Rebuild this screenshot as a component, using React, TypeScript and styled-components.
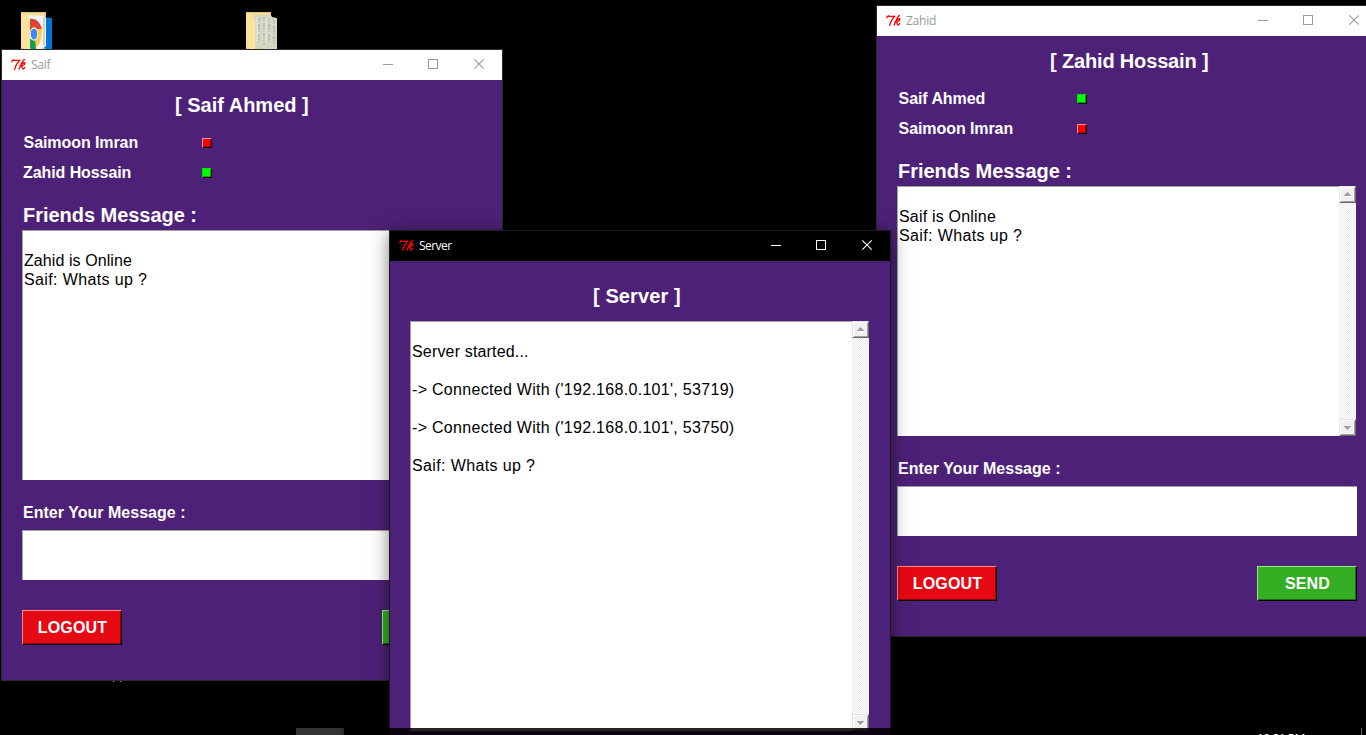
import React from "react";
import styled, { createGlobalStyle, css } from "styled-components";

const PURPLE = "#4d2177";

const GlobalStyle = createGlobalStyle`
  * { box-sizing: border-box; }
  html, body { margin: 0; background: #000; overflow: hidden; }
`;

const Desktop = styled.main`
  position: relative;
  width: 1366px;
  height: 735px;
  overflow: hidden;
  background: #000;
  font-family: "Liberation Sans", Arial, sans-serif;
`;

const Shortcut = styled.div<{ $x: number }>`
  position: absolute;
  left: ${(p) => p.$x}px;
  top: 12px;
  svg { display: block; }
`;

const ShortcutLabel = styled.span`
  position: absolute;
  left: 112px;
  top: 667px;
  color: #c8c8c8;
  font: 12px/16px "Open Sans", sans-serif;
`;

const Frame = styled.section<{ $x: number; $y: number; $active?: boolean }>`
  position: absolute;
  left: ${(p) => p.$x}px;
  top: ${(p) => p.$y}px;
  width: 502px;
  height: 632px;
  display: flex;
  flex-direction: column;
  border: 1px solid #2a2a2a;
  background: ${PURPLE};
  ${(p) =>
    p.$active &&
    css`
      border-color: #1c1c1c;
      box-shadow: 0 3px 17px rgba(0, 0, 0, 0.5);
    `}
`;

const TitleBar = styled.header<{ $active?: boolean }>`
  display: flex;
  align-items: center;
  height: 30px;
  flex: none;
  padding-left: 9px;
  background: ${(p) => (p.$active ? "#000" : "#fff")};
  color: ${(p) => (p.$active ? "#fff" : "#999")};
`;

const Caption = styled.span<{ $tracking: number }>`
  flex: 1;
  padding-left: 5px;
  font: 12px/16px "Open Sans", "Noto Sans", sans-serif;
  letter-spacing: ${(p) => p.$tracking}px;
`;

const Controls = styled.svg`
  display: block;
  width: 119px;
  height: 30px;
`;

const Client = styled.div`
  display: flex;
  flex-direction: column;
  flex: 1;
  padding: 0 20px;
`;

const Title = styled.h1<{ $top: number; $height: number; $indent: number; $tracking?: number }>`
  margin: ${(p) => p.$top}px 0 0;
  height: ${(p) => p.$height}px;
  padding-left: ${(p) => p.$indent}px;
  font-size: 20px;
  line-height: 24px;
  font-weight: bold;
  letter-spacing: ${(p) => p.$tracking ?? 0}px;
  color: #fff;
  white-space: nowrap;
`;

const FriendRow = styled.div`
  display: flex;
  align-items: center;
  height: 30px;
`;

const FriendName = styled.span<{ $indent: number }>`
  width: 180px;
  padding: 2px 0 0 ${(p) => p.$indent}px;
  font-size: 16px;
  font-weight: bold;
  line-height: 20px;
  letter-spacing: -0.08px;
  color: #fff;
`;

const Status = styled.i<{ $online: boolean }>`
  width: 10px;
  height: 10px;
  margin-top: 2px;
  background: ${(p) => (p.$online ? "#00ff00" : "#ff0000")};
  border: 1px solid #000;
  border-top-color: ${(p) => (p.$online ? "#00e000" : "#ff9090")};
  border-left-color: ${(p) => (p.$online ? "#00e000" : "#ff9090")};
  box-shadow: inset -1px -1px ${(p) => (p.$online ? "#00a800" : "#b00000")};
`;

const Heading = styled.h2`
  margin: 16px 0 0;
  height: 27px;
  padding-left: 1px;
  font-size: 20px;
  line-height: 24px;
  letter-spacing: -0.03px;
  color: #fff;
`;

const Label = styled.label`
  height: 50px;
  padding: 23px 0 0 1px;
  font-size: 16px;
  font-weight: bold;
  line-height: 20px;
  letter-spacing: 0.02px;
  color: #fff;
`;

const LogBox = styled.div<{ $height: number }>`
  display: flex;
  flex: none;
  width: 459px;
  height: ${(p) => p.$height}px;
  background: #fff;
`;

const LogText = styled.div`
  flex: 1;
  padding: 20px 0 0 1px;
  border-top: 1px solid #a0a0a0;
  border-left: 1px solid #a0a0a0;
  font: 16px/19px "Liberation Sans", Arial, sans-serif;
  color: #000;
`;

const LogLine = styled.div<{ $tracking: number }>`
  height: 19px;
  white-space: pre;
  letter-spacing: ${(p) => p.$tracking}px;
`;

const Scrollbar = styled.div`
  display: flex;
  flex-direction: column;
  justify-content: space-between;
  width: 17px;
  background: repeating-conic-gradient(#ececec 0 25%, #fff 0 50%) 0 0 / 2px 2px;
`;

const ScrollButton = styled.span`
  display: flex;
  width: 17px;
  height: 17px;
  background: #f0f0f0;
  border: 1px solid #696969;
  border-top-color: #e3e3e3;
  border-left-color: #e3e3e3;
  box-shadow: inset 1px 1px #fff, inset -1px -1px #a0a0a0;
`;

const Entry = styled.div`
  width: 460px;
  height: 50px;
  background: #fff;
  border-top: 1px solid #a0a0a0;
  border-left: 1px solid #a0a0a0;
`;

const Actions = styled.div`
  display: flex;
  justify-content: space-between;
  margin-top: 30px;
`;

const Button = styled.button<{ $kind: "logout" | "send" }>`
  width: 100px;
  height: 35px;
  padding: 0 0 0 1px;
  font: bold 16px/20px "Liberation Sans", Arial, sans-serif;
  letter-spacing: ${(p) => (p.$kind === "logout" ? 0.2 : 0.1)}px;
  color: #fff;
  background: ${(p) => (p.$kind === "logout" ? "#e60913" : "#35ad23")};
  border: 1px solid #000;
  border-top-color: ${(p) => (p.$kind === "logout" ? "#ff8a8a" : "#90ee88")};
  border-left-color: ${(p) => (p.$kind === "logout" ? "#ff8a8a" : "#90ee88")};
  box-shadow: inset -1px -1px ${(p) => (p.$kind === "logout" ? "#8b060c" : "#1e6814")};
`;

const Taskbar = styled.footer`
  position: absolute;
  left: 0;
  top: 728px;
  width: 1366px;
  height: 7px;
  display: flex;
  overflow: hidden;
  background: rgba(0, 0, 0, 0.86);
`;

const TaskButton = styled.span<{ $width: number; $shade: string }>`
  width: ${(p) => p.$width}px;
  background: ${(p) => p.$shade};
  &:first-child { margin-left: 296px; }
`;

const Clock = styled.time`
  margin-left: auto;
  width: 104px;
  padding-top: 3px;
  font: 12px/16px "Open Sans", sans-serif;
  letter-spacing: -0.5px;
  color: #fff;
`;

const ShowDesktop = styled.span`
  width: 5px;
  border-left: 1px solid #666;
`;

function TkIcon() {
  return (
    <svg width="15" height="14" viewBox="0 0 15 14" fill="none" stroke="#f00" strokeWidth="1.3">
      <path d="M.6 4.2 1.4 2.3H8.6L6.2 5.4 4.6 8.2 3.6 11.8M1.4 2.3 3 1.7" />
      <path d="M14 1.4 12.4 2.2 10.6 5.4 8 11.6M8.8 8 12.6 4.8 13.9 5 13.4 6.6 10.6 8 11.6 10.8 12.6 11 14 9" />
    </svg>
  );
}

function WindowControls() {
  return (
    <Controls viewBox="381 0 119 30" fill="none" stroke="currentColor">
      <path d="M381 14.5H391" shapeRendering="crispEdges" />
      <rect x="426.5" y="9.5" width="9" height="9" shapeRendering="crispEdges" />
      <path d="M472.3 9.3 481.7 18.7M481.7 9.3 472.3 18.7" strokeWidth="1.1" />
    </Controls>
  );
}

function Arrow({ down }: { down?: boolean }) {
  return (
    <svg width="15" height="15" viewBox="0 0 15 15" shapeRendering="crispEdges">
      {down ? (
        <>
          <path d="M5 7h7v1h-1v1h-1v1H9v1H8z" fill="#fff" />
          <path d="M4 6h7v1h-1v1H9v1H8v1H7V9H6V8H5V7H4z" fill="#a0a0a0" />
        </>
      ) : (
        <>
          <path d="M5 9h7v1H5z" fill="#fff" />
          <path d="M7 5h1v1h1v1h1v1h1v1H4V8h1V7h1V6h1z" fill="#a0a0a0" />
        </>
      )}
    </svg>
  );
}

interface Line {
  text: string;
  tracking?: number;
}

function Log({ height, lines }: { height: number; lines: Line[] }) {
  return (
    <LogBox $height={height}>
      <LogText>
        {lines.map((line, i) => (
          <LogLine key={i} $tracking={line.tracking ?? 0}>{line.text}</LogLine>
        ))}
      </LogText>
      <Scrollbar>
        <ScrollButton><Arrow /></ScrollButton>
        <ScrollButton><Arrow down /></ScrollButton>
      </Scrollbar>
    </LogBox>
  );
}

interface TkWindowProps {
  x: number;
  y: number;
  caption: string;
  active?: boolean;
  children: React.ReactNode;
}

function TkWindow({ x, y, caption, active, children }: TkWindowProps) {
  return (
    <Frame $x={x} $y={y} $active={active}>
      <TitleBar $active={active}>
        <TkIcon />
        <Caption $tracking={active ? -0.55 : -0.25}>{caption}</Caption>
        <WindowControls />
      </TitleBar>
      <Client>{children}</Client>
    </Frame>
  );
}

interface ChatWindowProps {
  x: number;
  y: number;
  caption: string;
  name: string;
  titleTracking: number;
  friends: { name: string; online: boolean }[];
  log: Line[];
}

function ChatWindow({ x, y, caption, name, titleTracking, friends, log }: ChatWindowProps) {
  return (
    <TkWindow x={x} y={y} caption={caption}>
      <Title $top={13} $height={34} $indent={153} $tracking={titleTracking}>[ {name} ]</Title>
      {friends.map((f) => (
        <FriendRow key={f.name}>
          <FriendName $indent={f.name.startsWith("Z") ? 1 : 1.6}>{f.name}</FriendName>
          <Status $online={f.online} />
        </FriendRow>
      ))}
      <Heading>Friends Message :</Heading>
      <Log height={250} lines={log} />
      <Label>Enter Your Message :</Label>
      <Entry />
      <Actions>
        <Button $kind="logout">LOGOUT</Button>
        <Button $kind="send">SEND</Button>
      </Actions>
    </TkWindow>
  );
}

function FolderIcon({ variant }: { variant: "chrome" | "papers" }) {
  return (
    <svg width="32" height="40" viewBox="0 0 32 40">
      <path d="M0 0H25V38H0z" fill="#e3c47c" />
      <path d="M1 1H24V10H1z" fill="#f6dc97" />
      {variant === "chrome" ? (
        <>
          <path d="M22 5 31 6V38H26L22 35z" fill="#0078d4" />
          <path d="M7 3 22 4 25 6V34L20 38H9z" fill="#f4f4f4" />
          <path d="M22 5 24 6V33L22 34z" fill="#cfcfcf" />
          <path d="M9 7C15 6 20 11 21 18L14 17 9 22z" fill="#db4437" />
          <path d="M15 17H21C21 28 18 34 13 37L12 28z" fill="#ffcd40" />
          <path d="M9 27 14 28 15 37H10L9 36z" fill="#0f9d58" />
          <ellipse cx="13" cy="22" rx="4.2" ry="6.8" fill="#f5f5f5" />
          <ellipse cx="13" cy="22" rx="3.3" ry="5.6" fill="#4285f4" />
        </>
      ) : (
        <>
          <path d="M7 3H25L26 5 31 6V38L9 36z" fill="#d6d8c6" />
          <path d="M13 6V30M18 5V33M23 6V31M28 8V35" stroke="#b4b6a5" strokeWidth="1.5" strokeDasharray="2 1 1 2 3 1" fill="none" />
          <path d="M11 5V30M20 8V30" stroke="#e9ebdf" strokeWidth="1" fill="none" />
        </>
      )}
      <path d="M0 1 7 4 9 8V38H5L0 35z" fill="#fde29c" />
    </svg>
  );
}

export default function App() {
  return (
    <Desktop>
      <GlobalStyle />
      <Shortcut $x={21}><FolderIcon variant="chrome" /></Shortcut>
      <Shortcut $x={246}><FolderIcon variant="papers" /></Shortcut>
      <ShortcutLabel>pp</ShortcutLabel>
      <ChatWindow
        x={1}
        y={49}
        caption="Saif"
        name="Saif Ahmed"
        titleTracking={0}
        friends={[
          { name: "Saimoon Imran", online: false },
          { name: "Zahid Hossain", online: true },
        ]}
        log={[
          { text: "Zahid is Online", tracking: 0.08 },
          { text: "Saif: Whats up ?", tracking: 0.37 },
        ]}
      />
      <ChatWindow
        x={876}
        y={5}
        caption="Zahid"
        name="Zahid Hossain"
        titleTracking={-0.16}
        friends={[
          { name: "Saif Ahmed", online: true },
          { name: "Saimoon Imran", online: false },
        ]}
        log={[
          { text: "Saif is Online", tracking: 0.2 },
          { text: "Saif: Whats up ?", tracking: 0.37 },
        ]}
      />
      <TkWindow x={389} y={230} caption="Server" active>
        <Title $top={23} $height={37} $indent={183} $tracking={0.1}>[ Server ]</Title>
        <Log
          height={410}
          lines={[
            { text: "Server started...", tracking: 0.17 },
            { text: "" },
            { text: "-> Connected With ('192.168.0.101', 53719)", tracking: 0.3 },
            { text: "" },
            { text: "-> Connected With ('192.168.0.101', 53750)", tracking: 0.3 },
            { text: "" },
            { text: "Saif: Whats up ?", tracking: 0.37 },
          ]}
        />
      </TkWindow>
      <Taskbar>
        <TaskButton $width={45} $shade="#333" />
        <TaskButton $width={3} $shade="#2a2a2a" />
        <Clock>10:21 PM</Clock>
        <ShowDesktop />
      </Taskbar>
    </Desktop>
  );
}
